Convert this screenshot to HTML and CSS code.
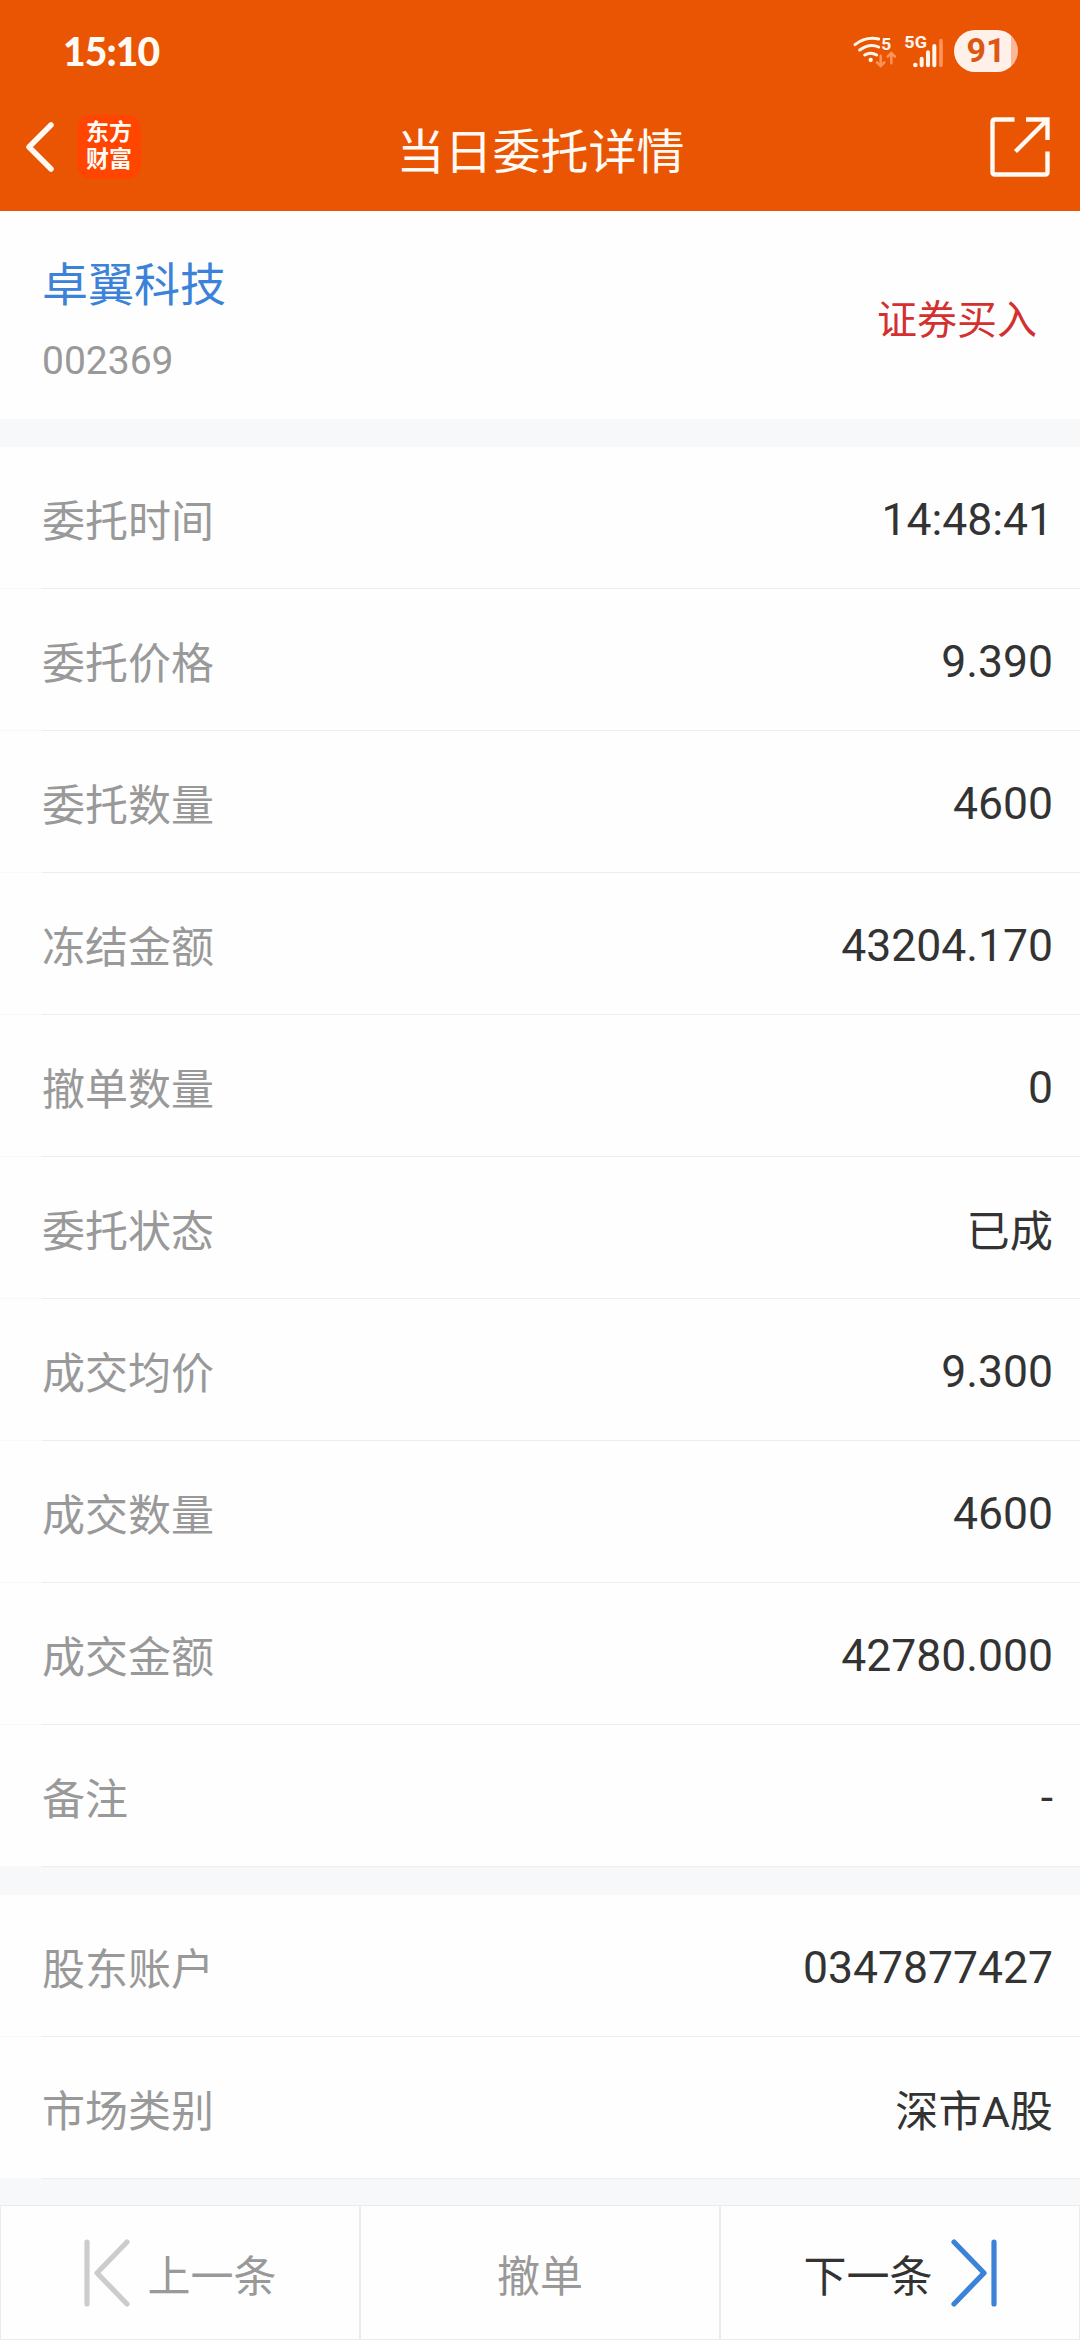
FILE: index.html
```html
<!DOCTYPE html>
<html lang="zh-CN">
<head>
    <meta charset="UTF-8">
    <meta name="viewport" content="width=device-width, initial-scale=1.0">
    <title>当日委托详情</title>
    <link rel="stylesheet" href="styles.css">
</head>
<body>
    <header class="header">
        <div class="status-bar">
            <span class="time">15:10</span>
            <div class="status-icons">
                <svg class="network" viewBox="96 96 276 120" fill="none" stroke="#fff6ec" stroke-width="9" stroke-linecap="round">
                    <path d="M105 137Q137 112 176 120M119 153Q149 131 176 144M134 168Q152 157 170 168"/>
                    <circle cx="152" cy="183" r="6.5" fill="#fff6ec" stroke="none"/>
                    <g stroke="#ff9458" stroke-width="7.5">
                        <path d="M182 170V200M171 190L182 201L193 190M214 193V163M203 173L214 162L225 173"/>
                    </g>
                    <path d="M305 179V199M324 160V199M343 141V199" stroke-width="12"/>
                    <path d="M363 125V199" stroke="#ff9458" stroke-width="11"/>
                    <circle cx="286" cy="198" r="7" fill="#fff6ec" stroke="none"/>
                    <text class="network-text" x="184" y="153" font-size="51" textLength="30" lengthAdjust="spacingAndGlyphs">5</text>
                    <text class="network-text" x="253" y="146" font-size="52" textLength="68" lengthAdjust="spacingAndGlyphs">5G</text>
                </svg>
                <span class="battery">91</span>
            </div>
        </div>
        <div class="nav-bar">
            <div class="nav-left">
                <svg class="back" viewBox="0 0 30 52" fill="none" stroke="#fffaf4" stroke-width="5.5" stroke-linecap="round" stroke-linejoin="round">
                    <path d="M27 4L5 26L27 48"/>
                </svg>
                <div class="logo">
                    <span>东方</span>
                    <span>财富</span>
                </div>
            </div>
            <h1 class="title">当日委托详情</h1>
            <svg class="share" viewBox="0 0 60 60" fill="none" stroke="#fffaf4" stroke-width="4.4">
                <path d="M24.5 2.5H5Q2.5 2.5 2.5 5V55Q2.5 57.5 5 57.5H55Q57.5 57.5 57.5 55V34.5"/>
                <path d="M36 2.5H57.5V23M57.5 2.5L25.5 34.5"/>
            </svg>
        </div>
    </header>

    <section class="stock">
        <div>
            <div class="stock-name">卓翼科技</div>
            <div class="stock-code">002369</div>
        </div>
        <div class="trade-type">证券买入</div>
    </section>

    <ul class="list">
        <li class="row"><span class="label">委托时间</span><span class="value">14:48:41</span></li>
        <li class="row"><span class="label">委托价格</span><span class="value">9.390</span></li>
        <li class="row"><span class="label">委托数量</span><span class="value">4600</span></li>
        <li class="row"><span class="label">冻结金额</span><span class="value">43204.170</span></li>
        <li class="row"><span class="label">撤单数量</span><span class="value">0</span></li>
        <li class="row"><span class="label">委托状态</span><span class="value value-cn">已成</span></li>
        <li class="row"><span class="label">成交均价</span><span class="value">9.300</span></li>
        <li class="row"><span class="label">成交数量</span><span class="value">4600</span></li>
        <li class="row"><span class="label">成交金额</span><span class="value">42780.000</span></li>
        <li class="row"><span class="label">备注</span><span class="value">-</span></li>
    </ul>

    <ul class="list">
        <li class="row"><span class="label">股东账户</span><span class="value">0347877427</span></li>
        <li class="row"><span class="label">市场类别</span><span class="value value-cn">深市A股</span></li>
    </ul>

    <footer class="footer">
        <button class="btn btn-prev">
            <svg class="btn-icon" viewBox="0 0 46 68" fill="none" stroke="#cccccc" stroke-width="5.2" stroke-linecap="round" stroke-linejoin="round">
                <path d="M3 3V65M43 3L13 34L43 65"/>
            </svg>
            <span>上一条</span>
        </button>
        <button class="btn">
            <span>撤单</span>
        </button>
        <button class="btn btn-next">
            <span>下一条</span>
            <svg class="btn-icon" viewBox="0 0 46 68" fill="none" stroke="#3c82d9" stroke-width="5.2" stroke-linecap="round" stroke-linejoin="round">
                <path d="M43 3V65M3 3L33 34L3 65"/>
            </svg>
        </button>
    </footer>
</body>
</html>
```
FILE: styles.css
```css
:root {
    --orange: #ea5504;
    --gap: #f7f8fa;
    --line: #ededed;
    --text: #333333;
    --gray: #999999;
    --blue: #3c82d9;
    --red: #d3302f;
    --font: Roboto, 'Noto Sans CJK SC', sans-serif;
}

* {
    box-sizing: border-box;
}

body {
    margin: 0;
    width: 1080px;
    height: 2340px;
    display: flex;
    flex-direction: column;
    background: var(--gap);
    color: var(--text);
    font-family: var(--font);
}

.header {
    height: 211px;
    background: var(--orange);
    color: #fffaf4;
}

.status-bar {
    height: 102px;
    padding: 0 62px;
    display: flex;
    justify-content: space-between;
    align-items: center;
}

.time {
    font-family: Lato, sans-serif;
    font-size: 39px;
    font-weight: 900;
    letter-spacing: -0.9px;
    padding-left: 1px;
}

.status-icons {
    display: flex;
    align-items: center;
    gap: 10px;
}

.network {
    width: 92px;
    height: 40px;
}

.network-text {
    font-family: Roboto, sans-serif;
    font-weight: 700;
    fill: #fff6ec;
    stroke: none;
}

.battery {
    width: 64px;
    height: 42px;
    border-radius: 21px;
    background: linear-gradient(90deg, #fff1e9 57px, #f9b898 57px);
    color: #dc5716;
    font-family: Roboto, sans-serif;
    font-size: 34px;
    font-weight: 700;
    line-height: 41px;
    text-align: center;
}

.nav-bar {
    height: 90px;
    padding: 0 30px 0 24px;
    display: grid;
    grid-template-columns: 1fr auto 1fr;
    align-items: center;
}

.nav-left {
    display: flex;
    align-items: center;
    gap: 23px;
}

.back {
    width: 30px;
    height: 52px;
}

.logo {
    width: 64px;
    height: 64px;
    border-radius: 14px;
    background: #ff4500;
    display: flex;
    flex-direction: column;
    align-items: center;
    justify-content: center;
    font-size: 23px;
    font-weight: 700;
    line-height: 27px;
    padding-bottom: 2px;
}

.title {
    margin: 12px 0 0 7px;
    font-size: 48px;
    font-weight: 400;
    line-height: 60px;
}

.share {
    width: 60px;
    height: 60px;
    justify-self: end;
}

.stock {
    height: 208px;
    padding: 15px 43px 0 42px;
    display: flex;
    justify-content: space-between;
    align-items: center;
    background: #fefefe;
}

.stock-name {
    color: var(--blue);
    font-size: 46px;
    line-height: 76px;
}

.stock-code {
    color: var(--gray);
    font-size: 39px;
    line-height: 76px;
}

.trade-type {
    color: var(--red);
    font-size: 40px;
    line-height: 60px;
    margin-bottom: 4px;
}

.list {
    margin: 28px 0 0;
    padding: 0;
    list-style: none;
}

.row {
    height: 142px;
    padding: 0 27px 0 42px;
    display: flex;
    justify-content: space-between;
    align-items: center;
    /* divider starts at the label, the part left of it is paler */
    background:
        linear-gradient(90deg, var(--gap) 42px, var(--line) 42px) bottom / 100% 1px no-repeat,
        #fefefe;
}

.label {
    color: var(--gray);
    font-size: 43px;
}

.value {
    font-size: 44.5px;
    padding-top: 3px;
}

.value-cn {
    font-size: 43.2px;
    padding-top: 0;
}

.footer {
    height: 135px;
    margin-top: auto;
    display: grid;
    grid-template-columns: repeat(3, 1fr);
}

.btn {
    display: flex;
    align-items: center;
    justify-content: center;
    border: 1px solid #ececec;
    background: #fefefe;
    color: var(--gray);
    font-family: var(--font);
    font-size: 43px;
    padding: 0;
}

.btn span {
    padding-top: 1px;
}

.btn-icon {
    width: 46px;
    height: 68px;
}

.btn-prev {
    gap: 18px;
}

.btn-next {
    gap: 18px;
    color: var(--text);
}
```
